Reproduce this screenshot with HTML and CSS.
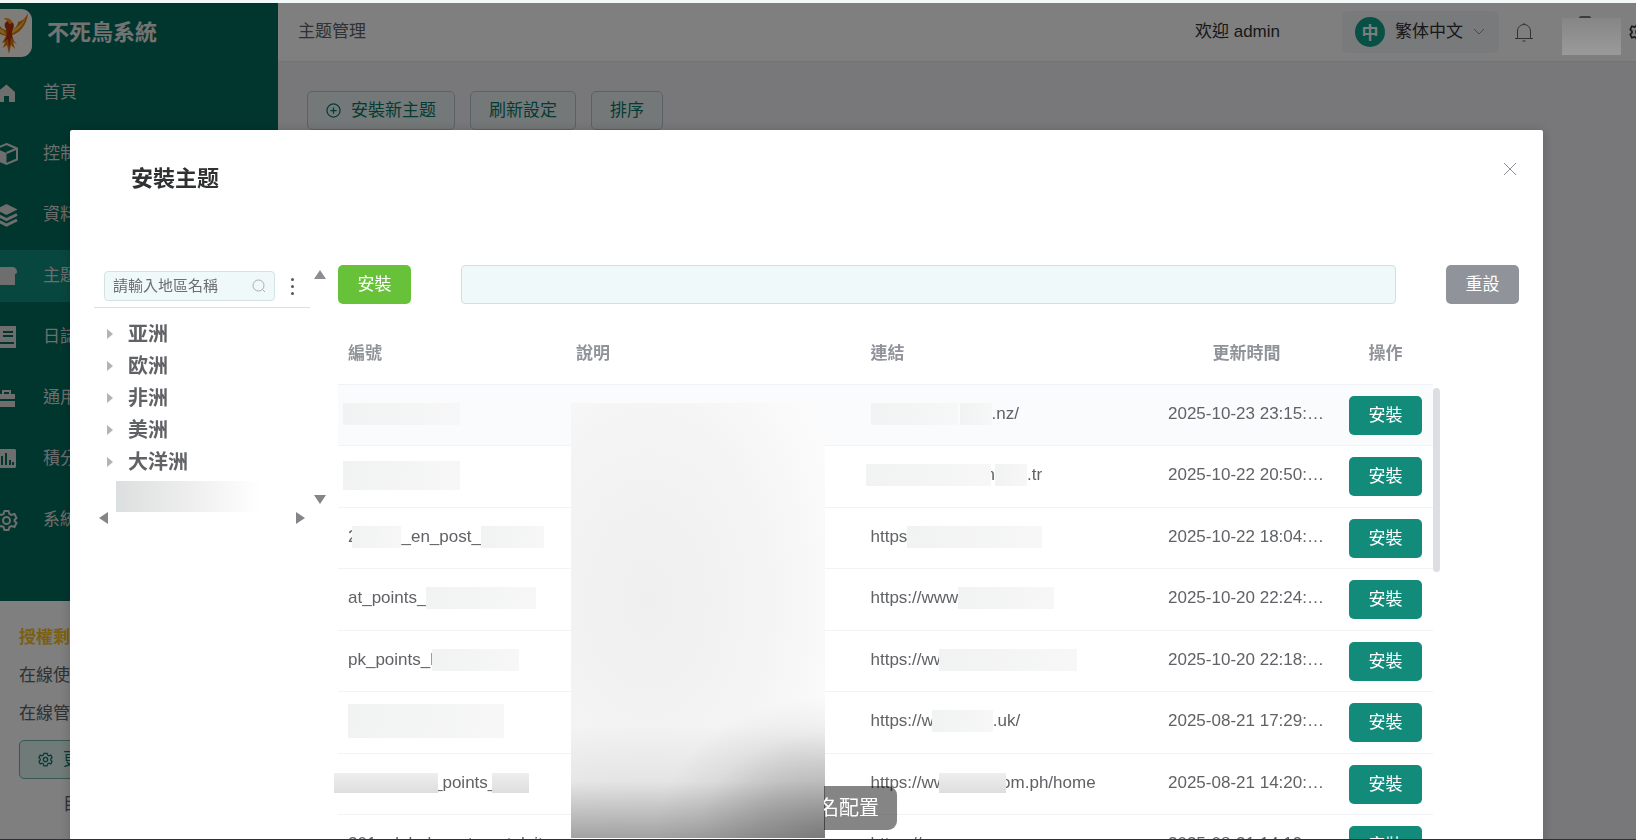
FILE: index.html
```html
<!DOCTYPE html>
<html lang="zh-Hant">
<head>
<meta charset="utf-8">
<title>主题管理</title>
<link rel="stylesheet" href="styles.css">
</head>
<body>
<div class="app">
  <aside class="side">
    <nav class="menu">
      <div class="brand">
        <svg class="logo" viewBox="0 0 48 48" aria-hidden="true">
          <rect width="48" height="48" rx="11" fill="#fffaf2"/>
          <path d="M25 27C34 26 43 17 44 4c-3 6-6 8-10 9 0 3-3 6-6 8l-3-3-3 3c-4-1-7-4-8-8-4-1-7-3-10-9 1 13 9 22 18 23l-4 7 3-1-2 6 4-3 2 9 2-9 4 4-2-7 4 2z" fill="#e07a12"/>
          <path d="M27 25c7-3 12-8 15-17-4 7-9 10-14 13zM22 26C14 24 8 17 6 9c3 7 9 10 14 13z" fill="#ffc23c"/>
          <path d="M24 12c-4 1-4 5-2 8s1 8-2 13l4-3 1 9 2-10 3 3c-2-5-3-8-1-12s1-8-5-8z" fill="#b63412"/>
          <path d="M24 12c-2-1-3-1-4-3 3 0 5 0 7 2l2 3-4 1z" fill="#f39a1c"/>
        </svg>
        <span>不死鳥系統</span>
      </div>
      <a href="#"><svg viewBox="0 0 24 24"><path d="M11.500 3.500 2 11v1h1v9h6v-6h5v6h6V11z"/></svg>首頁</a>
      <a href="#"><svg viewBox="0 0 24 24"><path d="M11.500 2 22 6.500v11L11.500 22 1 17.500v-11z" class="ln"/><path d="M1 6.500 11.500 11v11L1 17.500z"/><path d="M11.500 11 22 6.500" class="ln"/></svg>控制台</a>
      <a href="#"><svg viewBox="0 0 24 24"><path d="m11.500 1 11 5.500-11 5.500L.5 6.500z"/><path d="m1 11.500 10.500 5 10.500-5M1 17l10.500 5L22 17" class="ln th"/></svg>資料</a>
      <a href="#" class="on"><svg viewBox="0 0 24 24"><path d="M4 3h13c3 0 5 2 5 5 0 1-1 2-2 2v11H3V10C1 9 1 3 4 3z"/></svg>主題管理</a>
      <a href="#"><svg viewBox="0 0 24 24"><path fill-rule="evenodd" d="M2 1h19v22H2zM8 6v2h10V6zm0 4v2h10v-2zM2 17v2h17v-2z"/></svg>日誌</a>
      <a href="#"><svg viewBox="0 0 24 24"><path fill-rule="evenodd" d="M7 4h9v4h4v5H2V8h5zm2 2v2h5V6zM2 15h18v6H2z"/></svg>通用設定</a>
      <a href="#"><svg viewBox="0 0 24 24"><path fill-rule="evenodd" d="M3 2h17l1 1v17l-1 1H2V3zM6 9v9h2V9zm4-3v12h2V6zm4 7v5h2v-5zm3 2v3h2v-3z"/></svg>積分</a>
      <a href="#"><svg viewBox="0 0 24 24"><path class="ln" d="M9.500 3h4l1 3 2 1 3-1 2 4-2 2v1l2 2-2 4-3-1-2 1-1 3h-4l-1-3-2-1-3 1-2-4 2-2v-1l-2-2 2-4 3 1 2-1z"/><circle cx="11.500" cy="12.500" r="3.500" class="ln"/></svg>系統設定</a>
    </nav>
    <section class="licence">
      <strong>授權剩餘時間</strong>
      <span>在線使用者</span>
      <span>在線管理員</span>
      <button class="soft"><svg viewBox="0 0 24 24"><path class="ln" d="M9.500 2h5l1 3 2 1 3-1 2 4-2 2v2l2 2-2 4-3-1-2 1-1 3h-5l-1-3-2-1-3 1-2-4 2-2v-2l-2-2 2-4 3 1 2-1z"/><circle cx="12" cy="12" r="3.500" class="ln"/></svg>更新授權</button>
      <small>目前版本</small>
    </section>
  </aside>
  <main class="main">
    <header class="top">
      <span class="crumb">主题管理</span>
      <span class="hello">欢迎 admin</span>
      <button class="lang"><i>中</i>繁体中文<svg viewBox="0 0 12 12"><path class="ln" d="m1 3 5 5 5-5"/></svg></button>
      <svg class="bell" viewBox="0 0 20 20"><path class="ln" d="M1 16.500h18M3.500 16V9a6.500 6.500 0 0 1 13 0v7M10 2.500V1M8.500 19h3"/></svg>
      <span class="user"><span class="blot"></span></span>
      <svg class="cog" viewBox="0 0 24 24"><path class="ln" d="M9.500 2h5l1 3 2 1 3-1 2 4-2 2v2l2 2-2 4-3-1-2 1-1 3h-5l-1-3-2-1-3 1-2-4 2-2v-2l-2-2 2-4 3 1 2-1z"/><circle cx="12" cy="12" r="3.500" class="ln"/></svg>
    </header>
    <div class="acts">
      <button class="soft"><svg viewBox="0 0 24 24"><circle cx="12" cy="12" r="10.500" class="ln"/><path class="ln" d="M12 7v10M7 12h10"/></svg>安裝新主题</button>
      <button class="soft">刷新設定</button>
      <button class="soft">排序</button>
    </div>
  </main>
</div>

<div class="overlay">
  <div class="dialog" role="dialog" aria-labelledby="dlg-title">
    <div class="dlg-head">
      <h1 id="dlg-title">安裝主题</h1>
      <button class="close" aria-label="關閉"><svg viewBox="0 0 12 12"><path d="M0 0l12 12M12 0 0 12"/></svg></button>
    </div>
    <div class="dlg-body">
      <div class="region">
        <div class="tree">
          <div class="find">
            <label class="field"><input type="text" aria-label="地區名稱" placeholder="請輸入地區名稱"><svg viewBox="0 0 14 14"><circle cx="6.500" cy="6.500" r="5.500"/><path d="m10.500 10.500 2.500 2.500"/></svg></label>
            <button class="more" aria-label="更多"><i></i><i></i><i></i></button>
          </div>
          <ul>
            <li>亚洲</li><li>欧洲</li><li>非洲</li><li>美洲</li><li>大洋洲</li>
          </ul>
          <span class="tree-blot"></span>
          <div class="hbar"><i class="lt"></i><i class="rt"></i></div>
        </div>
        <div class="vbar"><i class="up"></i><i class="dn"></i></div>
      </div>
      <div class="list">
        <div class="tools">
          <button class="btn green">安裝</button>
          <input class="query" type="text" aria-label="搜尋">
          <button class="btn grey">重設</button>
        </div>
        <div class="wrap">
          <table>
            <colgroup><col class="c1"><col><col><col class="c4"><col class="c5"></colgroup>
            <thead><tr><th>編號</th><th>說明</th><th>連結</th><th class="mid">更新時間</th><th class="mid">操作</th></tr></thead>
            <tbody>
              <tr><td><div><b class="m w117 out"></b></div></td><td></td><td><div><b class="m w87"></b><b class="m w32 gap"></b>.nz/</div></td><td class="date">2025-10-23 23:15:08</td><td class="mid"><button class="btn">安裝</button></td></tr>
              <tr><td><div><b class="m w117 out tall"></b></div></td><td></td><td><div><b class="m w125 out over"></b>n<b class="m w32"></b>.tr</div></td><td class="date">2025-10-22 20:50:16</td><td class="mid"><button class="btn">安裝</button></td></tr>
              <tr><td><div>2<b class="m w49 cut"></b>_en_post_<b class="m w63"></b></div></td><td></td><td><div>https<b class="m w135"></b></div></td><td class="date">2025-10-22 18:04:22</td><td class="mid"><button class="btn">安裝</button></td></tr>
              <tr><td><div>at_points_<b class="m w110"></b></div></td><td></td><td><div>https://www<b class="m w96"></b></div></td><td class="date">2025-10-20 22:24:31</td><td class="mid"><button class="btn">安裝</button></td></tr>
              <tr><td><div>pk_points_l<b class="m w87 nip"></b></div></td><td></td><td><div>https://ww<b class="m w138 deep"></b></div></td><td class="date">2025-10-20 22:18:45</td><td class="mid"><button class="btn">安裝</button></td></tr>
              <tr><td><div><b class="m w156 huge"></b></div></td><td></td><td><div>https://w<b class="m w61 nip"></b>.uk/</div></td><td class="date">2025-08-21 17:29:10</td><td class="mid"><button class="btn">安裝</button></td></tr>
              <tr><td><div><b class="m w104 far dark over"></b>_points_<b class="m w37 dark cut"></b></div></td><td></td><td><div>https://ww<b class="m w67 deep dark over"></b>om.ph/home</div></td><td class="date">2025-08-21 14:20:53</td><td class="mid"><button class="btn">安裝</button></td></tr>
              <tr><td><div>201_global_post_portal_it</div></td><td></td><td><div>https://w</div></td><td class="date">2025-08-21 14:19:37</td><td class="mid"><button class="btn">安裝</button></td></tr>
            </tbody>
          </table>
          <span class="thumb"></span>
          <span class="veil"></span>
        </div>
      </div>
    </div>
  </div>
</div>
<div class="toast">域名配置</div>
</body>
</html>
```

FILE: styles.css
```css
* { box-sizing: border-box; }
body {
  margin: 0;
  height: 100vh;
  overflow: hidden;
  background: #f0f1f6;
  border-top: 3px solid #f2f8f8;
  font: 17px/24px "Liberation Sans", "Noto Sans CJK SC", sans-serif;
  color: #606266;
}
button, input { font: inherit; color: inherit; }
button { border: 0; padding: 0; background: none; cursor: pointer; }
svg { flex: none; fill: currentColor; }
.ln { fill: none; stroke: currentColor; stroke-width: 2; }
.th { stroke-width: 3; }

/* page behind the dialog */
.app { display: flex; height: 100%; }
.side { width: 278px; flex: none; background: #fff; }
.menu { background: #006c5c; padding-bottom: 55px; color: #dcdcdc; }
.brand {
  display: flex;
  align-items: center;
  gap: 15px;
  height: 64px;
  padding-bottom: 4px;
  font-size: 22px;
  font-weight: 700;
  color: #e6e6e6;
}
.logo { width: 48px; height: 48px; margin-left: -16px; }
.menu a {
  display: flex;
  align-items: center;
  gap: 24px;
  height: 52px;
  margin-bottom: 9px;
  color: inherit;
  text-decoration: none;
}
.menu a.on { background: #108f7e; }
.menu a svg { width: 24px; height: 24px; margin-left: -5px; }
.menu a:last-child { margin-bottom: 0; }
.licence {
  display: flex;
  flex-direction: column;
  align-items: flex-start;
  gap: 14px;
  padding: 25px 19px;
}
.licence strong { color: #f8c020; }
.licence .soft { width: 240px; border-color: #70b0a5; background: #e0f4f1; }
.licence small { font-size: 17px; padding-left: 44px; }

.main { flex: 1; min-width: 0; }
.top {
  display: flex;
  align-items: center;
  height: 59px;
  padding-left: 20px;
  background: #fff;
  border-bottom: 1px solid #eae6ea;
  overflow: hidden;
}
.crumb { flex: 1; }
.hello { color: #303133; margin-right: 62px; }
.lang {
  display: flex;
  align-items: center;
  gap: 10px;
  height: 42px;
  padding: 0 14px 0 13px;
  border-radius: 6px;
  background: #f3f4f8;
  color: #303133;
}
.lang i {
  width: 30px;
  border-radius: 50%;
  background: #10a088;
  color: #f4fffd;
  font: 700 17px/30px "Noto Sans CJK SC", sans-serif;
}
.lang svg { width: 12px; height: 12px; color: #909399; }
.lang .ln { stroke-width: 1; }
.bell { width: 20px; height: 20px; margin: 0 28px 0 15px; }
.bell .ln { stroke-width: 1; }
.user { position: relative; z-index: 12; width: 59px; flex: none; }
.user::before {
  content: "";
  display: block;
  width: 12px;
  height: 2px;
  margin-left: 17px;
  border-radius: 6px 6px 0 0;
  background: #3c3d40;
}
.blot {
  display: block;
  height: 37px;
  margin-bottom: -12px;
  background: linear-gradient(#868686, #9a9a9a);
}
.top .user { padding-bottom: 5px; }
.cog { width: 20px; height: 20px; margin: 0 -13px 0 8px; color: #303133; }
.acts { display: flex; gap: 15px; padding: 29px; }
.soft {
  display: flex;
  align-items: center;
  gap: 10px;
  height: 39px;
  padding: 0 18px;
  border: 1px solid #b4c4c8;
  border-radius: 5px;
  background: #e8f0f2;
  color: #087868;
}
.soft svg { width: 15px; height: 15px; }

/* dialog */
.overlay {
  position: fixed;
  inset: 3px 0 0;
  z-index: 10;
  padding: 127px 93px 0 70px;
  background: rgba(0, 0, 0, .5);
  border-bottom: 1px solid #303033;
  overflow: hidden;
}
.dialog {
  background: #fff;
  border-radius: 2px;
  box-shadow: 0 1px 12px rgba(0, 0, 0, .2);
}
.dlg-head {
  display: flex;
  align-items: flex-start;
  justify-content: space-between;
  padding: 29px 26px 66px 61px;
}
h1 { margin: 0; font-size: 22px; line-height: 40px; color: #303133; }
.close { display: flex; align-items: center; justify-content: center; width: 14px; height: 20px; }
.close svg { width: 12px; height: 12px; stroke: #909399; overflow: visible; }
.dlg-body { display: flex; gap: 12px; padding: 0 24px; }

/* region tree */
.region { display: flex; gap: 4px; flex: none; align-self: flex-start; }
.tree { width: 216px; }
.find {
  display: flex;
  align-items: center;
  gap: 13px;
  padding: 6px 0 6px 10px;
  border-bottom: 1px solid #dcdfe6;
}
.field {
  display: flex;
  align-items: center;
  width: 171px;
  height: 30px;
  padding: 0 8px;
  border: 1px solid #d5e2e4;
  border-radius: 4px;
  background: #f0f9fa;
}
.field input {
  flex: 1;
  min-width: 0;
  padding: 0;
  border: 0;
  outline: 0;
  background: none;
  font-size: 15px;
}
.field input::placeholder { color: #6a6d72; opacity: 1; }
.field svg { width: 14px; height: 14px; fill: none; stroke: #a8abb2; }
.more { display: flex; flex-direction: column; gap: 4px; width: 9px; align-items: center; }
.more i { width: 3px; height: 3px; border-radius: 50%; background: #55585d; }
.tree ul {
  margin: 0;
  padding: 10px 0 0 13px;
  list-style: none;
  font-size: 20px;
  font-weight: 700;
  line-height: 32px;
}
.tree li { display: flex; align-items: center; gap: 15px; }
.tree li::before {
  content: "";
  border: 5px solid transparent;
  border-left: 6px solid #b0b3b8;
  border-right: 0;
}
.tree-blot {
  display: block;
  width: 144px;
  height: 31px;
  margin: 3px 0 0 22px;
  background: linear-gradient(90deg, #dcdfdf, #ececec 45%, #fff);
}
.hbar { display: flex; justify-content: space-between; padding: 0 5px; }
.vbar { display: flex; flex-direction: column; justify-content: space-between; padding: 5px 0 20px; }
.hbar i, .vbar i { border: 6px solid transparent; }
.hbar .lt { border-right: 9px solid #858589; border-left: 0; }
.hbar .rt { border-left: 9px solid #858589; border-right: 0; }
.vbar .up { border-bottom: 9px solid #8d8d93; border-top: 0; }
.vbar .dn { border-top: 9px solid #858589; border-bottom: 0; }

/* theme list */
.list { flex: 1; min-width: 0; }
.tools { display: flex; gap: 50px; }
.btn {
  display: inline-block;
  width: 73px;
  height: 39px;
  flex: none;
  border-radius: 5px;
  background: #128b7b;
  color: #fff;
  vertical-align: top;
}
.green { background: #67c23a; }
.grey { background: #909399; }
.query {
  flex: 1;
  min-width: 0;
  padding: 0 12px;
  border: 1px solid #d5dfe1;
  border-radius: 4px;
  background: #f0f9fa;
}
.wrap { position: relative; display: flex; margin: 19px 79px 0 0; }
table { flex: 1; width: 100%; table-layout: fixed; border-collapse: separate; border-spacing: 0; }
.c1 { width: 228px; }
.c4 { width: 183px; }
.c5 { width: 95px; }
th {
  height: 62px;
  padding: 0 10px;
  border-bottom: 1px solid #f0f2f6;
  color: #909399;
  text-align: left;
}
td {
  padding: 11px 10px 10px;
  border-bottom: 1px solid #f2f3f6;
  line-height: 36px;
  white-space: nowrap;
  vertical-align: top;
}
tr:nth-child(even) td { padding-bottom: 11px; }
tbody tr:first-child { background: #fafbfd; }
td div { display: flex; align-items: center; height: 36px; }
.mid { text-align: center; }
td.date { padding-left: 13px; padding-right: 13px; overflow: hidden; text-overflow: ellipsis; text-align: center; }
.thumb { width: 7px; height: 184px; margin-top: 65px; border-radius: 4px; background: #dddee3; }

/* blanked-out values */
.m { position: relative; flex: none; height: 22px; background: linear-gradient(100deg, #f1f2f2, #f7f7f7); }
.tall { height: 29px; }
.huge { height: 34px; }
.dark { height: 20px; background: linear-gradient(#eee, #dedede); }
.over { margin-right: -5px; }
.out { margin-left: -5px; }
.far { margin-left: -14px; }
.cut { margin-left: -5px; }
.deep { margin-left: -7px; }
.nip { margin-left: -2px; }
.gap { margin-left: 2px; }
.w32 { width: 32px; }
.w37 { width: 37px; }
.w49 { width: 49px; }
.w61 { width: 61px; }
.w63 { width: 63px; }
.w67 { width: 67px; }
.w87 { width: 87px; }
.w96 { width: 96px; }
.w104 { width: 104px; }
.w110 { width: 110px; }
.w117 { width: 117px; }
.w125 { width: 125px; }
.w135 { width: 135px; }
.w138 { width: 138px; }
.w156 { width: 156px; }
.veil {
  position: absolute;
  z-index: 2;
  top: 80px;
  left: 233px;
  width: 254px;
  height: 435px;
  background:
    radial-gradient(170px 140px at 100% 100%, rgba(80, 80, 80, .5), rgba(80, 80, 80, .3) 40%, rgba(80, 80, 80, .08) 75%, transparent),
    linear-gradient(transparent 74%, rgba(90, 90, 90, .1) 87%, rgba(90, 90, 90, .55)),
    radial-gradient(200px 300px at 30% 45%, #efefef, #f4f4f4 60%, #fbfbfb);
}
.toast {
  position: fixed;
  z-index: 11;
  left: 50%;
  bottom: 10px;
  padding: 10px 18px;
  border-radius: 9px;
  background: rgba(0, 0, 0, .48);
  color: #fff;
  font-size: 20px;
  clip-path: inset(0 0 0 43px);
  transform: translateX(-37px);
}
```
